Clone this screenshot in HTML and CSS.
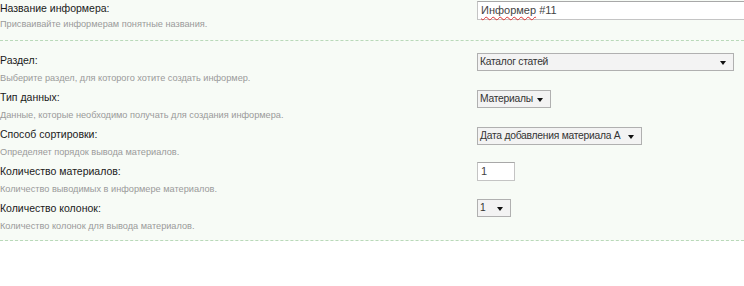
FILE: index.html
```html
<!DOCTYPE html>
<html lang="ru">
<head>
    <meta charset="UTF-8">
    <title>Новый информер</title>
    <link rel="stylesheet" href="styles.css">
</head>
<body>
    <div class="form">
        <div class="row first">
            <div class="info">
                <div class="label">Название информера:</div>
                <div class="desc">Присваивайте информерам понятные названия.</div>
            </div>
            <div class="control">
                <div class="text-input wide"><span class="typo">Информер</span> #11</div>
            </div>
        </div>

        <div class="row">
            <div class="info">
                <div class="label">Раздел:</div>
                <div class="desc">Выберите раздел, для которого хотите создать информер.</div>
            </div>
            <div class="control">
                <div class="select" style="width: 257px">Каталог статей</div>
            </div>
        </div>

        <div class="row">
            <div class="info">
                <div class="label">Тип данных:</div>
                <div class="desc">Данные, которые необходимо получать для создания информера.</div>
            </div>
            <div class="control">
                <div class="select" style="width: 74px">Материалы</div>
            </div>
        </div>

        <div class="row">
            <div class="info">
                <div class="label">Способ сортировки:</div>
                <div class="desc">Определяет порядок вывода материалов.</div>
            </div>
            <div class="control">
                <div class="select" style="width: 165px">Дата добавления материала А</div>
            </div>
        </div>

        <div class="row">
            <div class="info">
                <div class="label">Количество материалов:</div>
                <div class="desc">Количество выводимых в информере материалов.</div>
            </div>
            <div class="control">
                <div class="text-input small">1</div>
            </div>
        </div>

        <div class="row last">
            <div class="info">
                <div class="label">Количество колонок:</div>
                <div class="desc">Количество колонок для вывода материалов.</div>
            </div>
            <div class="control">
                <div class="select" style="width: 34px">1</div>
            </div>
        </div>
    </div>
</body>
</html>
```

FILE: styles.css
```css
body { margin: 0; background: #fff; font-family: "Liberation Sans", Arial, sans-serif; color: #222; }
.form { background: #f7fbf6; border-bottom: 1px dashed #b9d9b9; padding-bottom: 4px; }
.row { display: grid; grid-template-columns: 477px 1fr; padding-bottom: 1px; }
.row.first { border-bottom: 1px dashed #b9d9b9; padding-bottom: 8px; margin-bottom: 10px; }
.label { font-size: 10.5px; line-height: 18px; color: #1a1a1a; }
.desc { font-size: 9.2px; line-height: 18px; color: #9a9a9a; }
.row.first .label { line-height: 16px; }
.row.first .desc { line-height: 16px; }
.control { padding-top: 2px; }
.row.first .control { padding-top: 1px; }
.text-input { box-sizing: border-box; height: 19px; border: 1px solid #c4c4c4; border-top-color: #a8a8a8; background: #fff; font-size: 11px; line-height: 17px; padding-left: 3px; color: #444; }
.text-input.wide { width: 290px; }
.text-input.small { width: 38px; margin-top: -2px; }
.typo { text-decoration: underline wavy #d33; text-decoration-thickness: 1px; text-underline-offset: 2px; }
.select { position: relative; box-sizing: border-box; height: 18px; border: 1px solid #b0b0b0; background: #f3f3f3; font-size: 10.3px; letter-spacing: -0.25px; line-height: 16px; padding-left: 2px; padding-right: 16px; color: #333; white-space: nowrap; overflow: hidden; }
.select::after { content: ""; position: absolute; right: 7px; top: 7px; border-left: 3px solid transparent; border-right: 3px solid transparent; border-top: 4px solid #111; }
.row.last .control { padding-top: 0; }
```
